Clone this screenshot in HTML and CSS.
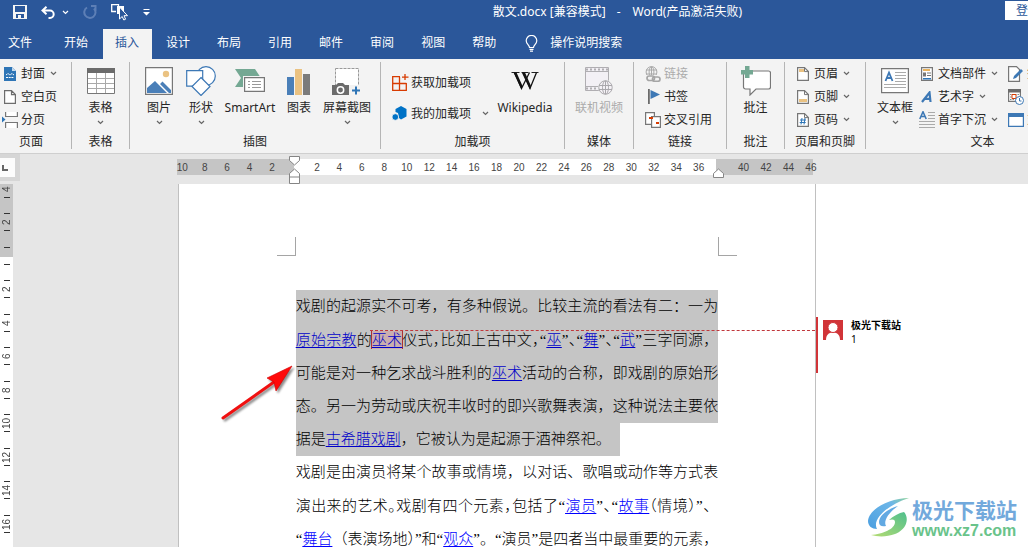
FILE: index.html
```html
<!DOCTYPE html>
<html lang="zh-CN">
<head>
<meta charset="utf-8">
<meta name="viewport" content="width=device-width, initial-scale=1">
<title>散文.docx - Word</title>
<link rel="stylesheet" href="styles.css">
</head>
<body>
<svg class="defs" width="0" height="0" aria-hidden="true">
  <symbol id="chev" viewBox="0 0 7 5"><path d="M1 1l2.500 2.500L6 1" fill="none" stroke="currentColor" stroke-width="1.200"/></symbol>
</svg>

<header class="titlebar">
  <div class="quick">
    <button class="qbtn" aria-label="保存"><svg width="14" height="14" viewBox="0 0 14 14"><path fill="#f5f5f5" fill-rule="evenodd" d="M0 0h14v14H0zM2 1h10v6H2zM3 9h8v4H8v-3H5v3H3z"/></svg></button>
    <button class="qbtn undo" aria-label="撤消"><svg width="15" height="13" viewBox="0 0 15 13"><path d="M1.500 4.500H9a3.700 3.700 0 0 1 0 7.400H7.500M5.500.7L1.500 4.500l4 3.800" fill="none" stroke="#fff" stroke-width="2"/></svg><svg class="chev" width="7" height="5"><use href="#chev"/></svg></button>
    <button class="qbtn" aria-label="恢复"><svg width="14" height="14" viewBox="0 0 14 14"><path d="M4 2.500a5.600 5.600 0 1 0 7 1M8 1h4.500v5" fill="none" stroke="#5d7fb6" stroke-width="2"/></svg></button>
    <button class="qbtn" aria-label="选择对象"><svg width="18" height="17" viewBox="0 0 18 17"><path d="M5 7.500H.7V.7h6.800v1.500" fill="none" stroke="#fff" stroke-width="1.300"/><path d="M6 2h7v8H6z" fill="#fff"/><path d="M8.500 3v12l2.700-2.500 1.600 3.500 1.800-.8-1.600-3.500h3.500z" fill="#2b579a" stroke="#fff"/></svg></button>
    <button class="qbtn" aria-label="自定义快速访问工具栏"><svg width="7" height="7" viewBox="0 0 7 7"><path d="M.5 0h6v1h-6zM0 3h7L3.500 6.500z" fill="#fff"/></svg></button>
  </div>
  <h1 class="doctitle">散文.docx [兼容模式]<span class="dash">-</span>Word(产品激活失败)</h1>
  <button class="signin">登录</button>
</header>

<nav class="tabs">
  <button class="tab file">文件</button>
  <button class="tab">开始</button>
  <button class="tab active">插入</button>
  <button class="tab">设计</button>
  <button class="tab">布局</button>
  <button class="tab">引用</button>
  <button class="tab">邮件</button>
  <button class="tab">审阅</button>
  <button class="tab">视图</button>
  <button class="tab">帮助</button>
  <button class="tellme"><svg width="13" height="17" viewBox="0 0 13 17"><path d="M4.500 12.500c0-2.500-3.300-3.500-3.300-6.800a5.300 5.300 0 0 1 10.600 0c0 3.300-3.300 4.300-3.300 6.800zM4.500 14.300h4M5 16.200h3" fill="none" stroke="#fff" stroke-width="1.200"/></svg>操作说明搜索</button>
</nav>

<div class="ribbon">
  <section class="group g-pages">
    <div class="tools">
      <div class="stack">
        <button class="small"><span class="ico"><svg width="12" height="14" viewBox="0 0 12 14"><path d="M0 0h8l4 4v10H0z" fill="#2e75b6"/><path d="M8 0v4h4z" fill="#c4daed"/><path d="M2 8l2-1.500L6 8l2-1.500L10 8M2 10.500h8" stroke="#fff" fill="none" stroke-dasharray="2 .7"/></svg></span>封面<svg class="chev" width="7" height="5"><use href="#chev"/></svg></button>
        <button class="small"><span class="ico"><svg width="12" height="14" viewBox="0 0 12 14"><path d="M.6.6h6.900l3.900 3.900v8.900H.6zM7.500.6v4h3.900" fill="#fff" stroke="#6d6d6d" stroke-width="1.200"/></svg></span>空白页</button>
        <button class="small"><span class="ico"><svg width="16" height="16" viewBox="0 0 16 16"><path d="M3.600 0v4.500h11.800V0M3.600 16v-5.500h11.800V16" fill="#fff" stroke="#777" stroke-width="1.200"/><path d="M0 4.500L3.500 7.500 0 10.500z" fill="#2e75b6"/></svg></span>分页</button>
      </div>
    </div>
    <h2 class="caption">页面</h2>
  </section>

  <section class="group g-table">
    <div class="tools">
      <button class="large"><span class="pic"><svg width="28" height="26" viewBox="0 0 28 26"><path d="M.5.5h27v25H.5z" fill="#fff" stroke="#777"/><path d="M0 0h28v5H0z" fill="#6b6b6b"/><path d="M1 10.500h26M1 15.500h26M1 20.500h26M9.500 5v20M18.500 5v20" stroke="#a9a9a9"/></svg></span>表格<svg class="chev" width="7" height="5"><use href="#chev"/></svg></button>
    </div>
    <h2 class="caption">表格</h2>
  </section>

  <section class="group g-illus">
    <div class="tools">
      <button class="large w42"><span class="pic"><svg width="28" height="28" viewBox="0 0 28 28"><path d="M.6.600h26.800v26.800H.6z" fill="#fff" stroke="#777" stroke-width="1.200"/><circle cx="21" cy="7" r="3.200" fill="#eac282"/><path d="M2 26v-5l8-7 12 12zM15 17l2.500-2.500L26 23v3h-2z" fill="#4a7fb8"/></svg></span>图片<svg class="chev" width="7" height="5"><use href="#chev"/></svg></button>
      <button class="large w42"><span class="pic"><svg width="30" height="30" viewBox="0 0 30 30"><circle cx="20" cy="10" r="9.300" fill="#fff" stroke="#3d78b5" stroke-width="1.200"/><path d="M.7 4.700h16v15.500H.7z" fill="#fff" stroke="#3d78b5" stroke-width="1.200"/><path d="M15 11.500l9 9-9 9-9-9z" fill="#fff" stroke="#3d78b5" stroke-width="1.200"/></svg></span>形状<svg class="chev" width="7" height="5"><use href="#chev"/></svg></button>
      <button class="large w56"><span class="pic"><svg width="30" height="27" viewBox="0 0 30 27"><path d="M0 1h20l6 9-6 9H0l6-9z" fill="#74a893"/><path d="M8 8h22v17H8z" fill="#f3f3f3"/><path d="M9.600 9.600h19.800v13.800H9.600z" fill="#fff" stroke="#777" stroke-width="1.200"/><path d="M13 13.500h2m2 0h9M13 16.500h2m2 0h9M13 19.500h2m2 0h9" stroke="#999"/></svg></span>SmartArt</button>
      <button class="large w42"><span class="pic"><svg width="24" height="27" viewBox="0 0 24 27"><path d="M0 9h7v18H0z" fill="#4a7fb8"/><path d="M8 1h7v26H8z" fill="#eac282"/><path d="M16 6h7v21h-7z" fill="#7b7b7b"/></svg></span>图表</button>
      <button class="large w54"><span class="pic"><svg width="30" height="29" viewBox="0 0 30 29"><path d="M3.500 1.500h23v24h-23z" fill="#fff" stroke="#999" stroke-dasharray="3 1"/><path d="M0 18h4l2-2h5l2 2h4v10H0z" fill="#6b6b6b"/><path d="M17 18h12v11H17z" fill="#f3f3f3"/><circle cx="8.500" cy="23" r="3.200" fill="#6b6b6b" stroke="#fff" stroke-width="1.500"/><path d="M20 23.500h8M24 19.500v8" stroke="#2e75b6" stroke-width="2"/></svg></span>屏幕截图<svg class="chev" width="7" height="5"><use href="#chev"/></svg></button>
    </div>
    <h2 class="caption">插图</h2>
  </section>

  <section class="group g-addins">
    <div class="tools">
      <div class="stack two">
        <button class="small"><span class="ico"><svg width="17" height="17" viewBox="0 0 17 17"><path d="M8 2.600H.7v13.700h13.600V9M.7 9.500h13.600M7.500 3v13M13 0v6M10 3.200h6.500" fill="none" stroke="#d83b01" stroke-width="1.300"/></svg></span>获取加载项</button>
        <button class="small"><span class="ico"><svg width="16" height="15" viewBox="0 0 16 15"><path d="M9 0l5.500 3v7.500L9 13.500 7 12 6 7 3.500 6V3z" fill="#0072c6"/><circle cx="3.300" cy="11" r="3.300" fill="#0072c6" stroke="#f3f3f3" stroke-width=".8"/></svg></span>我的加载项<svg class="chev far" width="7" height="5"><use href="#chev"/></svg></button>
      </div>
      <button class="large w62"><span class="pic"><svg width="28" height="20" viewBox="0 0 28 20"><path d="M.5 1.500h8M10.500 1.500h7M20.500 1.500h7" stroke="#222"/><path d="M3.500 1.500l7 16 8-16M11.500 1.500l7.500 16 6.500-16" fill="none" stroke="#111" stroke-width="1.300"/><path d="M2.500 1.500h3l6 13.500-1 3.500zM11.500 1.500H14l6 13.500-1 3.500z" fill="#111"/></svg></span>Wikipedia</button>
    </div>
    <h2 class="caption">加载项</h2>
  </section>

  <section class="group g-media">
    <div class="tools">
      <button class="large" disabled><span class="pic"><svg width="28" height="28" viewBox="0 0 28 28"><path d="M.5.5h23v23H.5z" fill="#f3f0f5" stroke="#b0aeb2"/><path d="M1 2.500h22M1 21.500h22" stroke="#b0aeb2" stroke-width="2" stroke-dasharray="2 2"/><path d="M1 4.500h22M1 19.500h22" stroke="#b0aeb2"/><circle cx="20.500" cy="20.500" r="7.500" fill="#f3f3f3"/><g fill="#f5f2f6" stroke="#aaa8ac"><circle cx="20.500" cy="20.500" r="6.700"/><ellipse cx="20.500" cy="20.500" rx="3" ry="6.700"/><path d="M20.500 14v13M14 18.500h13M14 22.500h13"/></g></svg></span>联机视频</button>
    </div>
    <h2 class="caption">媒体</h2>
  </section>

  <section class="group g-links">
    <div class="tools">
      <div class="stack">
        <button class="small" disabled><span class="ico"><svg width="16" height="16" viewBox="0 0 16 16"><g fill="none" stroke="#aaa"><circle cx="6.500" cy="6" r="5.400"/><ellipse cx="6.500" cy="6" rx="2.400" ry="5.400"/><path d="M1 4h11M1 8h11M6.500 1v10"/></g><path d="M1 9h15v7H1z" fill="#f3f3f3"/><g fill="none" stroke="#a5a5a5" stroke-width="1.700"><rect x="2" y="10" width="7.500" height="4.500" rx="2.200"/><rect x="7.500" y="11" width="7.500" height="4.300" rx="2.200"/></g></svg></span>链接</button>
        <button class="small"><span class="ico"><svg width="13" height="15" viewBox="0 0 13 15"><path d="M1 0h1.800v15H1z" fill="#6b6b6b"/><path d="M3.500 1L13 5.500 3.500 10z" fill="#3d78b5"/></svg></span>书签</button>
        <button class="small"><span class="ico"><svg width="16" height="16" viewBox="0 0 16 16"><path d="M.6.6h8.800v11.800H.6z" fill="#fff" stroke="#777" stroke-width="1.200"/><path d="M6.600 4.600h8.800v10.800H6.600z" fill="#fff" stroke="#777" stroke-width="1.200"/><path d="M4 5h4v2H4zM11 10h3v2h-3z" fill="#d83b01"/></svg></span>交叉引用</button>
      </div>
    </div>
    <h2 class="caption">链接</h2>
  </section>

  <section class="group g-comment">
    <div class="tools">
      <button class="large"><span class="pic"><svg width="30" height="30" viewBox="0 0 30 30"><path d="M4 5h23.500a2 2 0 0 1 2 2v14a2 2 0 0 1-2 2H15l-6 6v-6H4.500a2 2 0 0 1-2-2V5" fill="#fff" stroke="#777" stroke-width="1.200"/><path d="M4 0h4.500v4H12v4.500H8.500V12H4V8.500H0V4h4z" fill="#74a893"/></svg></span>批注</button>
    </div>
    <h2 class="caption">批注</h2>
  </section>

  <section class="group g-header">
    <div class="tools">
      <div class="stack">
        <button class="small"><span class="ico"><svg width="12" height="14" viewBox="0 0 12 14"><path d="M.6.6h6.900l3.900 3.900v8.900H.6z" fill="#fff" stroke="#777" stroke-width="1.200"/><path d="M2 2h5v3H2z" fill="#eac282"/><path d="M7.500.6v4h3.900" fill="none" stroke="#777"/></svg></span>页眉<svg class="chev" width="7" height="5"><use href="#chev"/></svg></button>
        <button class="small"><span class="ico"><svg width="12" height="14" viewBox="0 0 12 14"><path d="M.6.6h6.900l3.900 3.900v8.900H.6z" fill="#fff" stroke="#777" stroke-width="1.200"/><path d="M2 9h8v3H2z" fill="#eac282"/><path d="M7.500.6v4h3.900" fill="none" stroke="#777"/></svg></span>页脚<svg class="chev" width="7" height="5"><use href="#chev"/></svg></button>
        <button class="small"><span class="ico"><svg width="12" height="14" viewBox="0 0 12 14"><path d="M.6.6h6.900l3.900 3.900v8.900H.6z" fill="#fff" stroke="#777" stroke-width="1.200"/><path d="M5 5l-1 6.500M8 5l-1 6.500M3 7h6M2.700 9.500h6" stroke="#2e75b6"/><path d="M7.500.6v4h3.900" fill="none" stroke="#777"/></svg></span>页码<svg class="chev" width="7" height="5"><use href="#chev"/></svg></button>
      </div>
    </div>
    <h2 class="caption">页眉和页脚</h2>
  </section>

  <section class="group g-text">
    <div class="tools">
      <button class="large"><span class="pic"><svg width="28" height="26" viewBox="0 0 28 26"><path d="M.6.600h26.800v24H.6z" fill="#fff" stroke="#777" stroke-width="1.200"/><path d="M4.500 13L8 4.500 11.500 13M5.500 10h5" fill="none" stroke="#3d78b5" stroke-width="1.800"/><path d="M14 4.500h11M14 7.500h11M14 10.500h11M14 13.500h11M3 16.500h22M3 19.500h22" stroke="#aaa"/></svg></span>文本框<svg class="chev" width="7" height="5"><use href="#chev"/></svg></button>
      <div class="stack">
        <button class="small"><span class="ico"><svg width="12" height="14" viewBox="0 0 12 14"><path d="M.6.6h10.800v12.800H.6z" fill="#fff" stroke="#777" stroke-width="1.200"/><path d="M2 2h7v2H2z" fill="#eab35e"/><path d="M2 5.500h3v4H2z" fill="#777"/><path d="M6 6h4M6 8.500h4" stroke="#777"/><path d="M2 11h8v1.500H2z" fill="#2e75b6"/></svg></span>文档部件<svg class="chev" width="7" height="5"><use href="#chev"/></svg></button>
        <button class="small"><span class="ico"><svg width="12" height="12" viewBox="0 0 12 12"><path d="M1 11l7.500-9.500L9.500 11M4 7.800h5.500" fill="none" stroke="#3d78b5" stroke-width="2.200"/></svg></span>艺术字<svg class="chev" width="7" height="5"><use href="#chev"/></svg></button>
        <button class="small"><span class="ico"><svg width="16" height="17" viewBox="0 0 16 17"><path d="M.8 8L4 .8 7.200 8M2 5.500h4" fill="none" stroke="#3d78b5" stroke-width="1.600"/><path d="M9 1.500h7M9 4.500h7M9 7.500h7M0 10.500h16M0 13.500h16M0 16.500h16" stroke="#aaa"/></svg></span>首字下沉<svg class="chev" width="7" height="5"><use href="#chev"/></svg></button>
      </div>
      <div class="stack last">
        <button class="small"><span class="ico"><svg width="16" height="16" viewBox="0 0 16 16"><path d="M.6.6h7.900l3 3v11.800H.6z" fill="#fff" stroke="#777" stroke-width="1.200"/><path d="M5 13l1-3 7-7 2 2-7 7z" fill="#3d78b5"/></svg></span>签名行</button>
        <button class="small"><span class="ico"><svg width="16" height="16" viewBox="0 0 16 16"><path d="M.6.6h11.800v11.800H.6z" fill="#fff" stroke="#777" stroke-width="1.200"/><path d="M0 0h13v3.500H0z" fill="#6b6b6b"/><path d="M2 5.500h9M2 8h3M2 10.500h4" stroke="#888" stroke-dasharray="1.500 1"/><path d="M4 5.500h4v4H4z" fill="#fff" stroke="#d83b01"/><circle cx="11.500" cy="11.500" r="4" fill="#fff" stroke="#3d78b5"/><path d="M11.500 9v3h2" fill="none" stroke="#3d78b5"/></svg></span>日期和时间</button>
        <button class="small"><span class="ico"><svg width="16" height="14" viewBox="0 0 16 14"><path d="M.6.6h14.800v12.800H.6z" fill="#fff" stroke="#3d78b5" stroke-width="1.200"/><path d="M0 0h16v4H0z" fill="#3d78b5"/></svg></span>对象</button>
      </div>
    </div>
    <h2 class="caption">文本</h2>
  </section>
</div>

<main class="workspace">
  <div class="rulerrow">
    <button class="tabstop" aria-label="制表符"><svg width="6" height="6" viewBox="0 0 6 6"><path d="M1 0v5h5" fill="none" stroke="#666" stroke-width="2"/></svg></button>
    <div class="hruler">
      <ol class="hnums">
        <li>10</li><li>8</li><li>6</li><li>4</li><li>2</li>
        <li class="mark"><svg width="11" height="28" viewBox="0 0 11 28"><path d="M.5.5h10v4L5.500 9 .5 4.500z" fill="#fff" stroke="#858585"/><path d="M.5 27.500v-10l5-4.500 5 4.500v10zM.5 21h10" fill="#fff" stroke="#858585"/></svg></li>
        <li>2</li><li>4</li><li>6</li><li>8</li><li>10</li><li>12</li><li>14</li><li>16</li><li>18</li><li>20</li><li>22</li><li>24</li><li>26</li><li>28</li><li>30</li><li>32</li><li>34</li><li>36</li>
        <li class="mark right"><svg width="11" height="28" viewBox="0 0 11 28"><path d="M.5 21.500v-4l5-4.500 5 4.500v4z" fill="#fff" stroke="#858585"/></svg></li>
        <li>40</li><li>42</li><li>44</li><li>46</li>
      </ol>
    </div>
  </div>
  <div class="docrow">
    <div class="vruler">
      <ol class="vnums">
        <li><span>4</span></li><li><span>2</span></li><li><span></span></li><li><span>2</span></li><li><span>4</span></li><li><span>6</span></li><li><span>8</span></li><li><span>10</span></li><li><span>12</span></li><li><span>14</span></li><li><span>16</span></li>
      </ol>
    </div>
    <article class="page">
      <i class="corner left"></i>
      <i class="corner right"></i>
      <div class="text">
        <p class="selected">
          <span class="line">戏剧的起源实不可考，有多种假说。比较主流的看法有二：一为</span>
          <span class="line"><a href="#">原始宗教</a>的<span class="anchor"><a href="#">巫术</a></span>仪式<span class="half">，</span>比如上古中文<span class="half">，</span>“<a href="#">巫</a>”<span class="half">、</span>“<a href="#">舞</a>”<span class="half">、</span>“<a href="#">武</a>”三字同源，</span>
          <span class="line">可能是对一种乞求战斗胜利的<a href="#">巫术</a>活动的合称，即戏剧的原始形</span>
          <span class="line">态。另一为劳动或庆祝丰收时的即兴歌舞表演，这种说法主要依</span>
          <span class="line end">据是<a href="#">古希腊戏剧</a>，它被认为是起源于酒神祭祀。</span>
        </p>
        <p>
          <span class="line">戏剧是由演员将某个故事或情境，以对话、歌唱或动作等方式表</span>
          <span class="line">演出来的艺术<span class="half">。</span>戏剧有四个元素<span class="half">，</span>包括了“<a href="#">演员</a>”<span class="half">、</span>“<a href="#">故事</a><span class="half">（</span>情境<span class="half">）</span>”、</span>
          <span class="line">“<a href="#">舞台</a>（表演场地）”和“<a href="#">观众</a>”。“演员”是四者当中最重要的元素，</span>
        </p>
      </div>
      <div class="connector"></div>
      <svg class="arrow" width="84" height="66" viewBox="0 0 84 66"><g class="shadow"><path d="M5 57L56 21" stroke="#f01010" stroke-width="3" stroke-linecap="round"/><path d="M74 5L49 17l7 4 2 9z" fill="#ff0a0a" stroke="#d00000" stroke-width=".6"/></g></svg>
    </article>
    <aside class="comments">
      <div class="comment">
        <svg width="20" height="20" viewBox="0 0 20 20"><path d="M0 0h20v20H0z" fill="#d13438"/><path d="M3 20c0-5 2.500-7.500 7-7.500s7 2.500 7 7.500z" fill="#fff"/><circle cx="10" cy="7.500" r="5" fill="#fff" stroke="#d13438"/></svg>
        <div><strong>极光下载站</strong><p>1</p></div>
      </div>
    </aside>
  </div>
</main>

<div class="watermark">
  <svg width="46" height="42" viewBox="0 0 46 42">
    <defs><linearGradient id="wb" x1="0" y1="1" x2="1" y2="0"><stop offset="0" stop-color="#4b9fe0"/><stop offset=".7" stop-color="#6db6e8"/><stop offset="1" stop-color="#8fd39a"/></linearGradient><linearGradient id="wg" x1="0" y1="1" x2="1" y2="0"><stop offset="0" stop-color="#b5dc72"/><stop offset="1" stop-color="#4fbf8d"/></linearGradient></defs>
    <path d="M43 1C23 1 3 12 2 24c0 5 4 8 9 8-5-9 8-23 32-31z" fill="url(#wb)"/>
    <path d="M32 9c-11 3-19 10-19 16 0 4 3 5 7 4-3-5 3-14 12-20z" fill="#62a9e2"/>
    <path d="M23 23c4-4 10-7 15-8 6 7 2 18-9 22-8 3-17 3-24 1 12-1 24-6 24-13 0-3-3-3-6-2z" fill="url(#wg)"/>
  </svg>
  <div><strong>极光下载站</strong><span>www.xz7.com</span></div>
</div>
</body>
</html>
```
FILE: styles.css
```css
* { box-sizing: border-box; }

body {
  margin: 0;
  height: 100vh;
  display: flex;
  flex-direction: column;
  overflow: hidden;
  position: relative;
  background: #e6e6e6;
  color: #262626;
  font: 12px/16px "Noto Sans", "Noto Sans CJK SC", sans-serif;
}

button {
  border: 0;
  padding: 0;
  margin: 0;
  background: none;
  color: inherit;
  font: inherit;
  white-space: nowrap;
}

svg { display: block; flex: none; }
h1, h2, p, ol { margin: 0; padding: 0; font: inherit; }
ol { list-style: none; }
.defs { position: absolute; }
.chev { color: #666; }

/* Title bar */
.titlebar {
  flex: none;
  display: flex;
  align-items: center;
  height: 24px;
  background: #2b579a;
  color: #fff;
}
.quick { flex: 1; display: flex; align-items: center; gap: 14px; padding-left: 13px; }
.qbtn { display: flex; align-items: center; }
.undo { gap: 6px; }
.undo .chev { color: #fff; }
.doctitle { white-space: nowrap; }
.dash { padding: 0 12px 0 11px; }
.signin {
  align-self: flex-start;
  width: 23px;
  height: 19px;
  margin: 1px 0 0 263px;
  padding-left: 11px;
  overflow: hidden;
  text-align: left;
  background: #fff;
  color: #2b579a;
}

/* Ribbon tabs */
.tabs {
  flex: none;
  display: flex;
  gap: 2px;
  height: 35px;
  padding-top: 5px;
  background: #2b579a;
  color: #fff;
}
.tab { padding: 0 13px 2px 12px; }
.tab.file { padding: 0 18px 2px 8px; }
.tab.active { background: #f3f3f3; color: #2b579a; }
.tellme { display: flex; align-items: center; gap: 12px; margin-left: 14px; padding-bottom: 2px; }

/* Ribbon */
.ribbon {
  flex: none;
  display: flex;
  height: 95px;
  padding: 3px 0 4px;
  overflow: hidden;
  background: #f3f3f3;
  border-bottom: 1px solid #cfcfcf;
}
.group {
  flex: none;
  display: flex;
  flex-direction: column;
  border-right: 1px solid #b5b5b5;
}
.tools { flex: none; display: flex; height: 72px; }
.caption { flex: none; text-align: center; }
.stack { display: flex; flex-direction: column; }
.small { display: flex; align-items: center; height: 23px; gap: 3px; }
.small .ico { width: 16px; display: flex; justify-content: center; }
.small .chev { margin-left: 2px; }
.small .chev.far { margin-left: 8px; }
.stack.two { padding-top: 5px; }
.stack.two .small { height: 31px; }
.large { display: flex; flex-direction: column; align-items: center; min-width: 48px; }
.large .pic { display: flex; align-items: center; height: 38px; }
.large .chev { margin-top: 4px; }
button:disabled { color: #ababab; }
.w42 { width: 42px; min-width: 0; }
.w56 { width: 56px; }
.w54 { width: 54px; }
.w62 { width: 62px; }

.g-pages { width: 72px; }
.g-pages .tools { padding-left: 2px; }
.g-pages .caption { padding-right: 9px; }
.g-table { width: 58px; }
.g-table .tools, .g-media .tools, .g-comment .tools { justify-content: center; }
.g-illus { width: 251px; }
.g-illus .tools { padding-left: 8px; }
.g-addins { width: 184px; }
.g-addins .tools { padding-left: 11px; gap: 5px; }
.g-media { width: 69px; }
.g-links { width: 93px; }
.g-links .tools { padding-left: 11px; }
.g-comment { width: 58px; }
.g-header { width: 81px; }
.g-header .tools { padding-left: 10px; }
.g-text { width: 234px; }
.g-text .tools { padding-left: 5px; }
.g-text .stack.last { margin-left: 10px; }

/* Rulers */
.workspace { flex: 1; min-height: 0; display: flex; flex-direction: column; }
.rulerrow {
  flex: none;
  display: grid;
  grid-template-columns: 177fr 636fr 215fr;
  height: 30px;
}
.tabstop {
  width: 20px;
  height: 27px;
  display: flex;
  align-items: center;
  padding-left: 2px;
  background: #fcfcfc;
  border: solid #d6d6d6;
  border-width: 4px 5px 4px 0;
}
.hruler {
  height: 16px;
  margin-top: 5px;
  background: linear-gradient(to right, #c5c5c5 18.4%, #fff 18.4% 84.700%, #c5c5c5 84.700%);
}
.hnums {
  display: flex;
  margin: 0 -9px 0 -6px;
  color: #444;
  font: 10px/18px "Liberation Sans", sans-serif;
}
.hnums li { flex: 1 1 0; min-width: 0; display: flex; justify-content: center; }
.hnums .mark { height: 16px; margin-top: -3px; }
.hnums .mark.right { justify-content: flex-start; }
.hnums .mark.right svg { margin-left: 3px; }

.docrow { flex: 1; min-height: 0; display: grid; grid-template-columns: 178fr 638fr 212fr; }
.vruler {
  width: 13px;
  overflow: hidden;
  background: linear-gradient(#c5c5c5 73px, #fff 73px);
}
.vnums { margin-top: -12px; font: 10px/12px "Liberation Sans", sans-serif; color: #444; }
.vnums li {
  height: 33px;
  display: flex;
  flex-direction: column;
  justify-content: center;
  align-items: center;
}
.vnums li:nth-child(even) { height: 34px; }
.vnums li::before, .vnums li::after { content: ""; width: 6px; height: 1px; background: #333; }
.vnums span { height: 16px; writing-mode: vertical-rl; transform: rotate(180deg); text-align: center; }

/* Document page */
.page {
  position: relative;
  display: grid;
  grid-template-columns: 117fr 423fr 97fr;
  grid-template-rows: 72px 1fr;
  row-gap: 34px;
  min-height: 0;
  background: #fff;
  border: solid #c0c0c0;
  border-width: 0 1px;
}
.corner { width: 19px; height: 19px; border-bottom: 1px solid #a5a5a5; align-self: end; }
.corner.left { grid-column: 1; justify-self: end; border-right: 1px solid #a5a5a5; }
.corner.right { grid-column: 3; border-left: 1px solid #a5a5a5; }
.text {
  grid-column: 2;
  grid-row: 2;
  color: #000;
  font: 300 15px/33px "Liberation Serif", "Noto Sans CJK SC", sans-serif;
}
.line { display: block; height: 33px; white-space: nowrap; text-align: justify; text-align-last: justify; }
.line:nth-child(4n + 2) { height: 34px; line-height: 35px; }
.selected .line { background: #c5c5c5; }
.line.end { width: max-content; padding-right: 9px; text-align-last: left; }
.half { font-feature-settings: "halt"; }
.text a { color: #00f; text-decoration: underline; text-underline-offset: 2px; }
.selected a { color: #0000c8; }
.anchor { padding: 1px 0; background: #cbaeae; box-shadow: -1px 0 #a33, 1px 0 #a33; }
.connector {
  position: absolute;
  top: 146px;
  left: 30%;
  right: 0;
  border-top: 1px dashed #c0383c;
}
.arrow { position: absolute; top: 177px; left: 39px; }
.shadow { filter: drop-shadow(2px 2px 1px rgba(0, 0, 0, .45)); }

/* Comments */
.comments { background: #fff; padding-top: 133px; color: #000; }
.comment {
  display: flex;
  gap: 8px;
  height: 56px;
  margin-left: -1px;
  padding: 3px 0 0 5px;
  border-left: 3px solid #d13438;
  font-size: 10px;
  line-height: 14px;
}
.comment div { margin-top: -2px; }
.comment strong { display: block; }

/* Site mark */
.watermark {
  position: absolute;
  right: 11px;
  bottom: 8px;
  display: flex;
  align-items: center;
}
.watermark div { display: flex; flex-direction: column; }
.watermark strong { color: #72a9dc; font: 700 21px/25px "Noto Sans CJK SC", sans-serif; }
.watermark span { color: #69c38a; font: 700 16px/17px "Liberation Sans", sans-serif; }
```
